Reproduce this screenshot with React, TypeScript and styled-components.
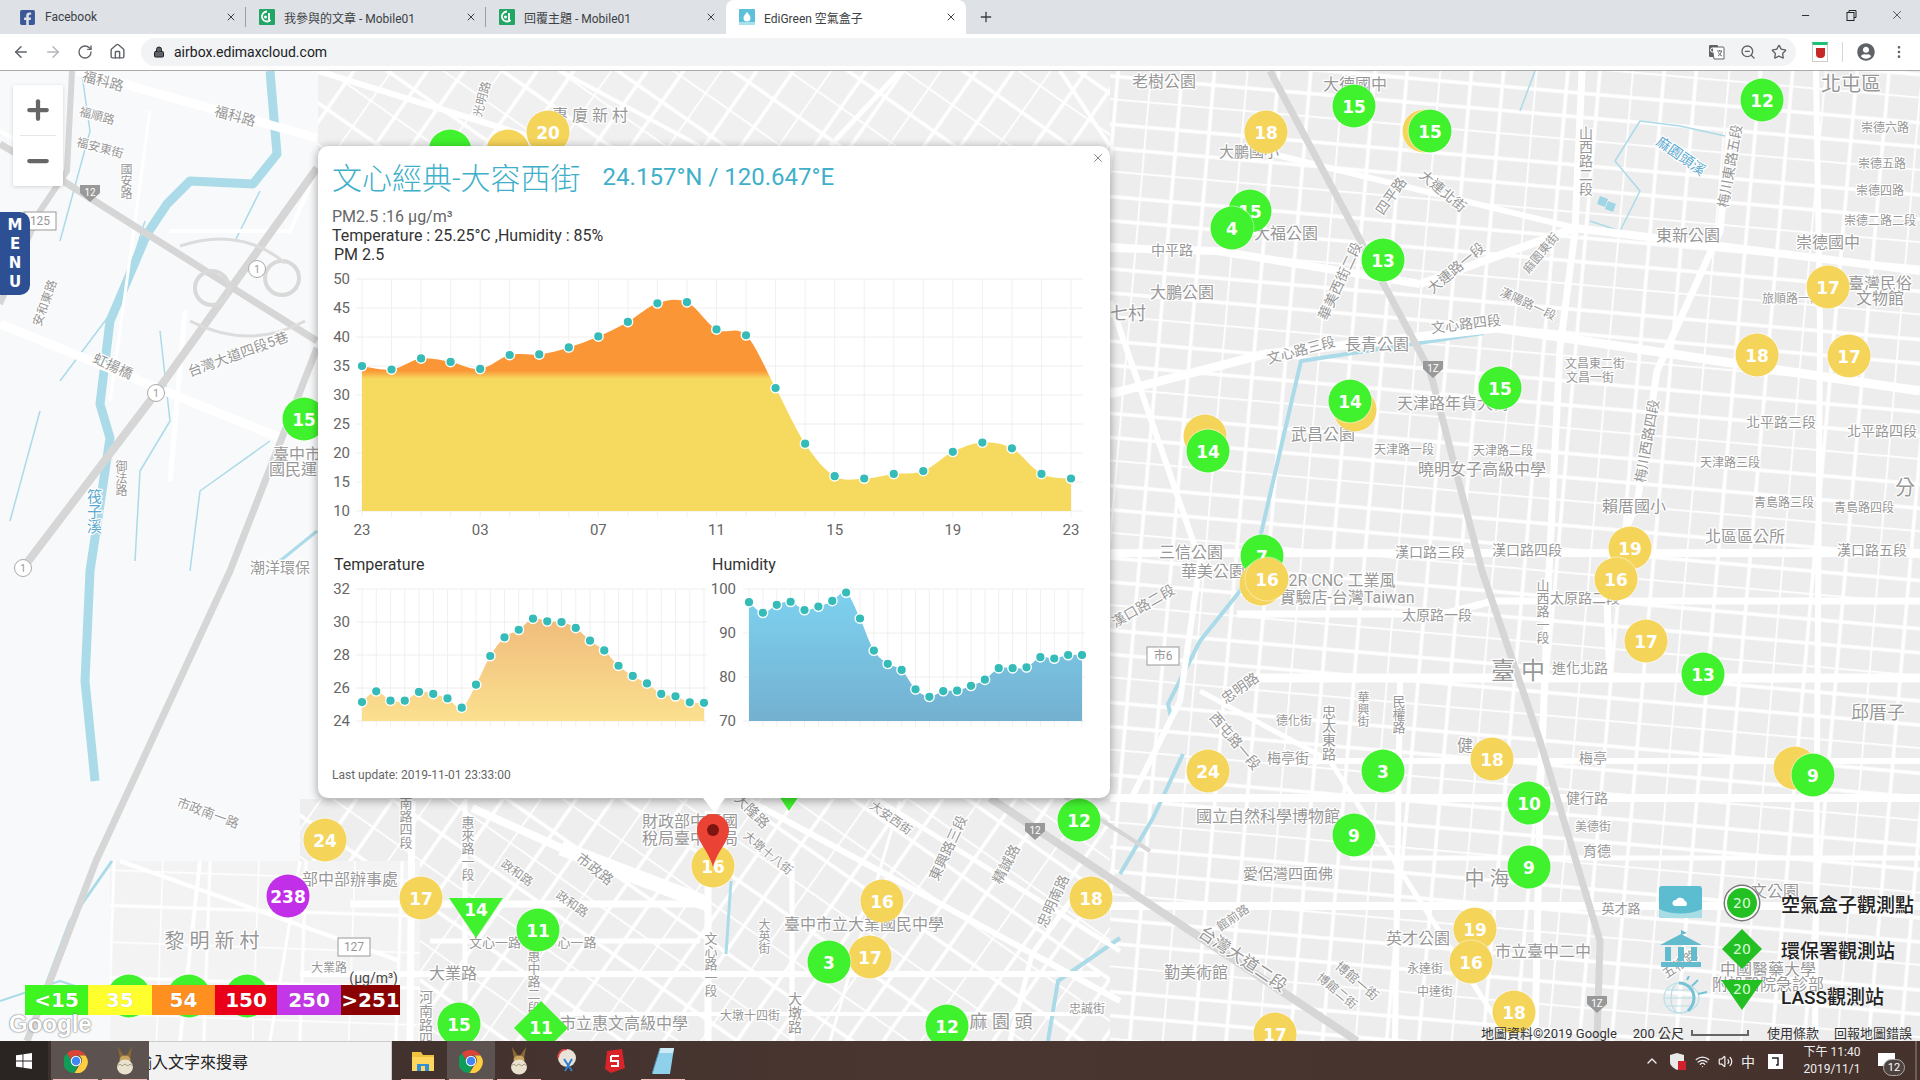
import React, { FC } from 'react';
import styled, { createGlobalStyle, css } from 'styled-components';
import {
	ArrowLeft,
	ArrowRight,
	ChevronUp,
	Home,
	Lock,
	Minus,
	MoreVertical,
	Plus,
	RotateCw,
	Star,
	Volume2,
	Wifi,
	X,
	ZoomOut,
} from 'lucide-react';
import { FaFacebookSquare, FaUserCircle } from 'react-icons/fa';

const GlobalStyle = createGlobalStyle`
	html, body { margin: 0; padding: 0; background: #fff; }
	* { box-sizing: border-box; }
`;

const CJK = `Roboto, "Noto Sans CJK TC", sans-serif`;

const Page = styled.div`
	width: 1920px;
	height: 1080px;
	display: flex;
	flex-direction: column;
	overflow: hidden;
	font-family: ${CJK};
`;

/* ---------- browser chrome ---------- */

const TabStrip = styled.div`
	height: 34px;
	flex: none;
	display: flex;
	align-items: stretch;
	padding-left: 6px;
	background: #dee1e6;
`;

const Tab = styled.div<{ $active?: boolean; $divider?: boolean }>`
	position: relative;
	width: 240px;
	display: flex;
	align-items: center;
	gap: 9px;
	padding: 0 9px 0 13px;
	font-size: 12px;
	color: #3c4043;
	${({ $active }) =>
		$active &&
		css`
			background: #fff;
			border-radius: 8px 8px 0 0;
		`}
	${({ $divider }) =>
		$divider &&
		css`
			&::after {
				content: '';
				position: absolute;
				right: 0;
				top: 7px;
				height: 20px;
				width: 1px;
				background: #9aa0a6;
			}
		`}
`;

const TabTitle = styled.span`
	flex: 1;
	white-space: nowrap;
`;

const NewTab = styled.div`
	width: 40px;
	display: flex;
	align-items: center;
	justify-content: center;
	color: #3c4043;
`;

const WindowButtons = styled.div`
	margin-left: auto;
	display: flex;
	color: #222;
`;

const WindowButton = styled.div`
	width: 46px;
	height: 30px;
	display: flex;
	align-items: center;
	justify-content: center;
`;

const Toolbar = styled.div`
	height: 37px;
	flex: none;
	display: flex;
	align-items: center;
	padding: 0 0 1px 5px;
	background: #fff;
	border-bottom: 1px solid #ababab;
	color: #5f6368;
`;

const NavButton = styled.div<{ $dim?: boolean }>`
	width: 32px;
	display: flex;
	justify-content: center;
	color: ${({ $dim }) => ($dim ? '#b4b7bb' : '#5f6368')};
`;

const Omnibox = styled.div`
	width: 1655px;
	height: 28px;
	margin-left: 8px;
	display: flex;
	align-items: center;
	gap: 9px;
	padding: 0 9px 0 12px;
	border-radius: 14px;
	background: #f1f3f4;
	font-size: 14px;
	color: #202124;
`;

const OmniActions = styled.div`
	margin-left: auto;
	display: flex;
	align-items: center;
	gap: 15px;
	color: #5f6368;
`;

const ExtIcon = styled.div`
	width: 16px;
	height: 20px;
	margin-left: 16px;
	border: 1px solid #ccc;
	border-top: 3px solid #1fbf75;
	display: flex;
	align-items: center;
	justify-content: center;
`;

const ExtBadge = styled.div`
	width: 9px;
	height: 10px;
	background: #c62828;
	border-radius: 0 0 4px 4px;
`;

const ToolSep = styled.div`
	width: 1px;
	height: 20px;
	margin: 0 14px;
	background: #d5d7da;
`;

const MenuDots = styled.div`
	width: 16px;
	margin-left: 16px;
	display: flex;
	justify-content: center;
`;

/* ---------- map ---------- */

const MapArea = styled.div`
	position: relative;
	height: 970px;
	flex: none;
	overflow: hidden;
	background: #f8f9fa;
`;

const MapDrawing = styled.svg`
	display: block;
	width: 1920px;
	height: 970px;
`;

const MapText = styled.text<{ $vertical?: boolean; $water?: boolean }>`
	font-family: Roboto, 'Noto Sans CJK TC', sans-serif;
	text-anchor: middle;
	dominant-baseline: central;
	fill: ${({ $water }) => ($water ? '#5ca9cf' : '#979797')};
	stroke: #fff;
	stroke-width: 2.5px;
	stroke-linejoin: round;
	paint-order: stroke;
	${({ $vertical }) => $vertical && 'writing-mode: vertical-rl;'}
`;

type MarkerKind = 'circle' | 'triangle' | 'diamond';
interface MarkerProps {
	$x: number;
	$y: number;
	$color: string;
	$kind?: MarkerKind;
}

const Marker = styled.div.attrs<MarkerProps>(({ $x, $y }) => ({
	style: { left: $x, top: $y - 70 },
}))<MarkerProps>`
	position: absolute;
	transform: translate(-50%, -50%);
	display: flex;
	align-items: center;
	justify-content: center;
	background: ${({ $color }) => $color};
	color: #fff;
	font-family: 'DejaVu Sans', sans-serif;
	font-weight: 700;
	font-size: 17px;
	${({ $kind = 'circle' }) =>
		$kind === 'circle' &&
		css`
			width: 43px;
			height: 43px;
			border-radius: 50%;
			box-shadow: 0 0 0 1px rgba(255, 255, 255, 0.45);
		`}
	${({ $kind }) =>
		$kind === 'triangle' &&
		css`
			width: 54px;
			height: 40px;
			padding-bottom: 16px;
			clip-path: polygon(0 0, 100% 0, 50% 100%);
		`}
	${({ $kind }) =>
		$kind === 'diamond' &&
		css`
			width: 54px;
			height: 54px;
			clip-path: polygon(50% 0, 100% 50%, 50% 100%, 0 50%);
		`}
`;

const ZoomControl = styled.div`
	position: absolute;
	left: 13px;
	top: 14px;
	width: 50px;
	height: 101px;
	display: flex;
	flex-direction: column;
	align-items: center;
	background: #fff;
	border-radius: 2px;
	box-shadow: 0 1px 4px rgba(0, 0, 0, 0.15);
	color: #666;
`;

const ZoomButton = styled.div`
	flex: 1;
	width: 100%;
	display: flex;
	align-items: center;
	justify-content: center;
`;

const ZoomRule = styled.div`
	width: 36px;
	height: 1px;
	background: #e6e6e6;
`;

const MenuTab = styled.div`
	position: absolute;
	left: 0;
	top: 141px;
	width: 30px;
	height: 83px;
	display: flex;
	flex-direction: column;
	align-items: center;
	justify-content: center;
	border-radius: 0 10px 10px 0;
	background: #2d4f93;
	color: #fff;
	font-family: 'DejaVu Sans', sans-serif;
	font-size: 15px;
	line-height: 19px;
	font-weight: 700;
`;

/* ---------- info window ---------- */

const InfoWindow = styled.div`
	position: absolute;
	left: 318px;
	top: 75px;
	width: 792px;
	height: 652px;
	padding: 10px 16px 14px 14px;
	background: #fff;
	border-radius: 10px;
	box-shadow: 0 2px 8px 1px rgba(0, 0, 0, 0.32);
	&::after {
		content: '';
		position: absolute;
		left: 385px;
		bottom: -14px;
		border-left: 11px solid transparent;
		border-right: 11px solid transparent;
		border-top: 14px solid #fff;
	}
`;

const CloseButton = styled.div`
	position: absolute;
	top: 4px;
	right: 5px;
	width: 14px;
	height: 14px;
	color: #777;
`;

const TitleRow = styled.div`
	height: 40px;
	display: flex;
	align-items: center;
	gap: 22px;
	color: #3fb0c9;
	white-space: nowrap;
`;

const PlaceName = styled.span`
	font-size: 30px;
	font-weight: 300;
`;

const Coordinates = styled.span`
	font-size: 24px;
	padding-top: 1px;
`;

const MetaLine = styled.div<{ $tone: string }>`
	font-size: 16px;
	line-height: 19px;
	color: ${({ $tone }) => $tone};
`;

const ChartCaption = styled.div`
	padding-left: 2px;
	font-size: 16px;
	line-height: 20px;
	color: #333;
`;

const MetaBlock = styled.div`
	margin-top: 11px;
`;

const WideChart = styled.div`
	margin-top: 4px;
`;

const ChartGrid = styled.div`
	margin-top: 9px;
	display: grid;
	grid-template-columns: 378px 380px;
`;

const Footer = styled.div`
	margin-top: 31px;
	font-size: 12px;
	line-height: 18px;
	color: #666;
`;

const ChartSvg = styled.svg`
	display: block;
`;

const AxisText = styled.text`
	font-family: Roboto, sans-serif;
	font-size: 15px;
	fill: #666;
	dominant-baseline: central;
`;

interface ChartProps {
	id: string;
	width: number;
	height: number;
	left: number;
	right: number;
	gridLeft: number;
	gridRight: number;
	top: number;
	bottom: number;
	min: number;
	max: number;
	values: number[];
	yLabels: number[];
	labelRight: number;
	xLabels?: string[];
	stops: [number, string][];
}

const smoothPath = (pts: [number, number][]) => {
	let d = `M${pts[0][0]} ${pts[0][1]}`;
	for (let i = 0; i < pts.length - 1; i++) {
		const p0 = pts[Math.max(i - 1, 0)];
		const p1 = pts[i];
		const p2 = pts[i + 1];
		const p3 = pts[Math.min(i + 2, pts.length - 1)];
		const k = 0.17;
		d += `C${p1[0] + (p2[0] - p0[0]) * k} ${p1[1] + (p2[1] - p0[1]) * k} ${p2[0] - (p3[0] - p1[0]) * k} ${p2[1] - (p3[1] - p1[1]) * k} ${p2[0]} ${p2[1]}`;
	}
	return d;
};

const Chart: FC<ChartProps> = ({
	id,
	width,
	height,
	left,
	right,
	gridLeft,
	gridRight,
	top,
	bottom,
	min,
	max,
	values,
	yLabels,
	labelRight,
	xLabels,
	stops,
}) => {
	const step = (right - left) / (values.length - 1);
	const toY = (v: number) => bottom - ((v - min) / (max - min)) * (bottom - top);
	const pts = values.map((v, i) => [left + i * step, toY(v)] as [number, number]);
	const line = smoothPath(pts);
	const area = `${line}L${right} ${bottom}L${left} ${bottom}Z`;

	return (
		<ChartSvg width={width} height={height} viewBox={`0 0 ${width} ${height}`}>
			<defs>
				<linearGradient id={id} gradientUnits="userSpaceOnUse" x1="0" y1={top} x2="0" y2={bottom}>
					{stops.map(([offset, color]) => (
						<stop key={offset} offset={offset} stopColor={color} />
					))}
				</linearGradient>
			</defs>
			{values.map((_, i) => (
				<line key={i} x1={left + i * step} x2={left + i * step} y1={top} y2={bottom + 6} stroke="#f0f0f0" />
			))}
			{yLabels.map((v) => (
				<g key={v}>
					<line x1={gridLeft} x2={gridRight} y1={toY(v)} y2={toY(v)} stroke="#eeeeee" />
					<AxisText x={labelRight} y={toY(v)} textAnchor="end">
						{v}
					</AxisText>
				</g>
			))}
			<path d={area} fill={`url(#${id})`} />
			{pts.map(([x, y], i) => (
				<circle key={i} cx={x} cy={y} r={4.8} fill="#35bbb8" stroke="#fff" strokeWidth={1.4} />
			))}
			{xLabels &&
				xLabels.map((label, i) => (
					<AxisText key={i} x={left + i * 4 * step} y={bottom + 19} textAnchor="middle">
						{label}
					</AxisText>
				))}
		</ChartSvg>
	);
};

/* ---------- legends over the map ---------- */

const ScaleLegend = styled.div`
	position: absolute;
	left: 25px;
	top: 914px;
	display: grid;
	grid-template-columns: 63px 64px 63px 62px 64px 59px;
`;

const ScaleUnit = styled.div`
	position: absolute;
	right: 2px;
	top: -15px;
	font-family: Roboto, sans-serif;
	font-size: 14px;
	line-height: 16px;
	color: #444;
`;

const ScaleCell = styled.div<{ $color: string }>`
	height: 30px;
	display: flex;
	align-items: center;
	justify-content: center;
	background: ${({ $color }) => $color};
	color: #fff;
	font-family: 'DejaVu Sans', sans-serif;
	font-weight: 700;
	font-size: 20px;
	text-shadow: 0 0 1px rgba(0, 0, 0, 0.25);
`;

const GoogleMark = styled.div`
	position: absolute;
	left: 9px;
	top: 939px;
	font-family: 'Liberation Sans', sans-serif;
	font-weight: 700;
	font-size: 24px;
	color: #fff;
	text-shadow: 0 0 2px #777, 0 0 1px #777;
`;

const Attribution = styled.div`
	position: absolute;
	right: 8px;
	bottom: 1px;
	height: 16px;
	display: flex;
	align-items: center;
	font-size: 13px;
	color: #333;
	white-space: nowrap;
`;

const ScaleBar = styled.div`
	width: 58px;
	height: 6px;
	margin: 2px 18px 0 7px;
	border: 2px solid #666;
	border-top: 0;
`;

const ReportLink = styled.span`
	margin-left: 15px;
`;

const GoogleData = styled.span`
	margin-right: 16px;
`;

const StationLegend = styled.div`
	position: absolute;
	left: 1659px;
	top: 809px;
	display: grid;
	grid-template-columns: 50px 66px auto;
	grid-auto-rows: 46px;
	align-items: center;
`;

const StationLabel = styled.div`
	padding-left: 6px;
	font-size: 19px;
	font-weight: 500;
	color: #222;
	white-space: nowrap;
	text-shadow: 0 0 3px #fff;
`;

const StationBadge = styled.div<{ $kind: MarkerKind }>`
	justify-self: center;
	display: flex;
	align-items: center;
	justify-content: center;
	color: #d8ffd8;
	background: #23c023;
	font-family: 'DejaVu Sans', sans-serif;
	font-size: 14px;
	${({ $kind }) =>
		$kind === 'circle' &&
		css`
			width: 34px;
			height: 34px;
			border-radius: 50%;
			border: 2px solid #fff;
			box-shadow: 0 0 0 1.5px #777;
		`}
	${({ $kind }) =>
		$kind === 'diamond' &&
		css`
			width: 40px;
			height: 40px;
			clip-path: polygon(50% 0, 100% 50%, 50% 100%, 0 50%);
		`}
	${({ $kind }) =>
		$kind === 'triangle' &&
		css`
			width: 42px;
			height: 30px;
			padding-bottom: 12px;
			clip-path: polygon(0 0, 100% 0, 50% 100%);
		`}
`;

/* ---------- taskbar ---------- */

const Taskbar = styled.div`
	height: 40px;
	flex: none;
	display: flex;
	align-items: stretch;
	background: linear-gradient(90deg, #3c2f2c, #4a3631 50%, #46322d);
	color: #eee;
`;

const StartButton = styled.div`
	width: 48px;
	margin-right: 3px;
	display: flex;
	align-items: center;
	justify-content: center;
	background: #2a2422;
`;

const TaskButton = styled.div<{ $active?: boolean; $running?: boolean; $width?: number }>`
	position: relative;
	width: ${({ $width }) => $width || 48}px;
	display: flex;
	align-items: center;
	justify-content: center;
	background: ${({ $active }) => ($active ? '#5c5250' : 'transparent')};
	${({ $running }) =>
		$running &&
		css`
			&::after {
				content: '';
				position: absolute;
				left: 2px;
				right: 2px;
				bottom: 0;
				height: 2px;
				background: #f3bcbc;
			}
		`}
`;

const SearchBox = styled.div`
	width: 243px;
	margin-right: 7px;
	display: flex;
	align-items: center;
	overflow: hidden;
	white-space: nowrap;
	text-indent: -13px;
	background: #f2f2f2;
	border: 1px solid #ccc;
	border-left: 0;
	font-size: 16px;
	color: #222;
`;

const Tray = styled.div`
	margin-left: auto;
	display: flex;
	align-items: center;
`;

const TraySlot = styled.div<{ $width: number }>`
	width: ${({ $width }) => $width}px;
	display: flex;
	align-items: center;
	justify-content: center;
	font-size: 14px;
`;

const Clock = styled.div`
	width: 84px;
	text-align: center;
	font-size: 12px;
	line-height: 17px;
`;

const NoticeIcon = styled.div`
	position: relative;
	width: 43px;
	height: 100%;
	border-right: 2px solid #6e5e5a;
	margin-right: 3px;
`;

const NoticeGlyph = styled.div`
	position: absolute;
	left: 4px;
	top: 12px;
	width: 17px;
	height: 13px;
	background: #fff;
`;

const NoticeCount = styled.div`
	position: absolute;
	left: 9px;
	top: 18px;
	width: 22px;
	height: 17px;
	border-radius: 9px;
	background: #4f4340;
	border: 1px solid #aaa;
	text-align: center;
	font-size: 11px;
	line-height: 15px;
	color: #fff;
`;

/* ---------- little drawings ---------- */

const ChromeLogo: FC<{ size?: number }> = ({ size = 24 }) => (
	<svg width={size} height={size} viewBox="0 0 48 48">
		<path d="M24 2a22 22 0 0 1 19 11H24a11 11 0 0 0-10.5 8L6 9A22 22 0 0 1 24 2z" fill="#db4437" />
		<path d="M6 9l9 15a11 11 0 0 0 12 9l-6 14.800A22 22 0 0 1 6 9z" fill="#0f9d58" />
		<path d="M43 13a22 22 0 0 1-22 34.800L31 32a11 11 0 0 0-1-19z" fill="#ffcd40" />
		<circle cx="24" cy="24" r="10.500" fill="#fff" />
		<circle cx="24" cy="24" r="8.500" fill="#4285f4" />
	</svg>
);

const BirdEgg: FC = () => (
	<svg width="24" height="28" viewBox="0 0 24 28">
		<path d="M5 0l6 9h2l6-9-2 12H7z" fill="#8a6a34" />
		<ellipse cx="12" cy="13" rx="5.500" ry="4.500" fill="#c9a560" />
		<ellipse cx="12" cy="20" rx="8" ry="7.500" fill="#e9e2cf" />
		<path d="M4 19l3-2 2 2 3-2 3 2 2-2 3 2" stroke="#a89b80" fill="none" />
	</svg>
);

const Mobile01Icon: FC = () => (
	<svg width="16" height="16" viewBox="0 0 16 16">
		<rect width="16" height="16" rx="1" fill="#22a565" />
		<path d="M8 2.500a5 5 0 1 0 3.500 8.500" stroke="#fff" strokeWidth="1.800" fill="none" />
		<path d="M10 4v7" stroke="#fff" strokeWidth="1.800" />
		<circle cx="6.500" cy="8" r="1.500" fill="#fff" />
	</svg>
);

const EdiGreenIcon: FC = () => (
	<svg width="16" height="16" viewBox="0 0 16 16">
		<rect width="16" height="16" rx="1" fill="#5cc0da" />
		<path d="M8 3c2 2.500 3.500 4 3.500 6a3.500 3.500 0 0 1-7 0c0-2 1.500-3.500 3.500-6z" fill="#fff" />
		<rect y="13" width="16" height="3" fill="#a9e0ec" />
	</svg>
);

const TranslateIcon: FC = () => (
	<svg width="16" height="16" viewBox="0 0 16 16">
		<rect x="0" y="1" width="9" height="12" rx="1" fill="#5f6368" />
		<path d="M3 3h11a1 1 0 0 1 1 1v11H5z" fill="#fff" stroke="#5f6368" />
		<circle cx="3.500" cy="6" r="2" fill="none" stroke="#fff" />
		<path d="M8 7h5M10.500 6v1M9 12c2-1 3-3 3.500-5M9.500 8.500c.5 1.500 2 3 3.500 3.500" stroke="#5f6368" fill="none" />
	</svg>
);

const WindowsLogo: FC = () => (
	<svg width="16" height="16" viewBox="0 0 16 16" fill="#fff">
		<path d="M0 2.300l6.500-.9v6.200H0zM7.400 1.300L16 0v7.600H7.400zM0 8.400h6.500v6.200L0 13.700zM7.400 8.400H16V16l-8.600-1.300z" />
	</svg>
);

const FolderIcon: FC = () => (
	<svg width="22" height="22" viewBox="0 0 22 22">
		<path d="M0 2h9l2 3h11v4H0z" fill="#f0c040" />
		<rect y="7" width="22" height="14" fill="#ffd75e" />
		<rect x="5" y="14" width="12" height="7" fill="#2f8fd8" />
		<rect x="9" y="16" width="4" height="5" fill="#ffd75e" />
	</svg>
);

const PaintIcon: FC = () => (
	<svg width="24" height="24" viewBox="0 0 24 24">
		<circle cx="12" cy="9" r="9" fill="#e8e2d8" />
		<path d="M3 9a9 9 0 0 1 9-9" stroke="#d44" strokeWidth="2" fill="none" />
		<path d="M9 10l8 12M17 10l-7 12" stroke="#2f7fd0" strokeWidth="2" />
	</svg>
);

const SketchIcon: FC = () => (
	<svg width="20" height="24" viewBox="0 0 20 24">
		<path d="M2 2l15-2 3 19-14 5-6-4z" fill="#d9252a" />
		<path d="M6 7h8M6 7v5h7v5H6" stroke="#fff" strokeWidth="2" fill="none" />
	</svg>
);

const NoteIcon: FC = () => (
	<svg width="22" height="26" viewBox="0 0 22 26">
		<path d="M8 0h14l-4 26H0z" fill="#8fd0ea" />
		<path d="M8 0h14l-1 5H7z" fill="#cdeaf5" />
		<path d="M0 26l8-26" stroke="#4f8fb0" />
	</svg>
);

const ShieldAlert: FC = () => (
	<svg width="17" height="17" viewBox="0 0 17 17">
		<path d="M1 2l7-2 7 2v7c0 4-4 6-7 8-3-2-7-4-7-8z" fill="#e9e9e9" />
		<rect x="9" y="8" width="8" height="9" fill="#d2222d" />
	</svg>
);

const AirboxIcon: FC = () => (
	<svg width="44" height="34" viewBox="0 0 44 34">
		<rect width="43" height="32" rx="3" fill="#5cbcd0" />
		<path d="M0 23c12 6 31 6 43 0v6a3 3 0 0 1-3 3H3a3 3 0 0 1-3-3z" fill="#a9dde6" />
		<path d="M16 20a3 3 0 0 1 1-6 5 5 0 0 1 9 1 3 3 0 0 1 1 5z" fill="#fff" />
	</svg>
);

const BankIcon: FC = () => (
	<svg width="44" height="38" viewBox="0 0 44 38" fill="#63bccd">
		<path d="M22 4l21 11H1z" />
		<path d="M22 0v5l6-2z" />
		<rect x="6" y="17" width="6" height="14" />
		<rect x="19" y="17" width="6" height="14" />
		<rect x="32" y="17" width="6" height="14" />
		<rect x="2" y="32" width="40" height="5" />
	</svg>
);

const GlobeIcon: FC = () => (
	<svg width="50" height="38" viewBox="0 0 50 38" fill="none" stroke="#75c3d4" strokeWidth="1.200">
		<circle cx="20" cy="22" r="15" stroke="#b8dfe8" />
		<path d="M20 7a20 15 0 0 1 0 30M5 22h30M8 14h24M8 30h24M20 7a8 15 0 0 0 0 30" stroke="#b8dfe8" />
		<path d="M20 7a15 15 0 0 1 15 15c0 6-3 10-6 13" strokeWidth="3" />
		<path d="M33 10l6-6M39 18l9-2M28 4l2-4" strokeWidth="2" />
	</svg>
);

const RedPin: FC = () => (
	<svg width="32" height="53" viewBox="0 0 32 53">
		<path d="M16 0C7 0 0 7 0 16c0 12 12 21 16 37 4-16 16-25 16-37C32 7 25 0 16 0z" fill="#ea4335" />
		<circle cx="16" cy="16" r="6" fill="#7e1510" />
	</svg>
);

const PinHolder = styled.div`
	position: absolute;
	left: 697px;
	top: 743px;
	line-height: 0;
`;

/* ---------- map data ---------- */

type Pt = [number, number];
const pathOf = (pts: Pt[]) => pts.map(([x, y], i) => `${i ? 'L' : 'M'}${x} ${y}`).join('');

const water: { pts: Pt[]; w: number }[] = [
	{ pts: [[270, 70], [277, 153], [253, 183], [190, 180], [167, 203], [147, 233], [110, 320], [100, 403], [110, 437], [90, 570], [85, 680], [95, 780]], w: 9 },
	{ pts: [[1484, 332], [1301, 360], [1291, 403], [1260, 537], [1240, 590], [1200, 640], [1168, 703], [1172, 720]], w: 4 },
	{ pts: [[1183, 753], [1153, 817], [1120, 873]], w: 4 },
	{ pts: [[731, 880], [726, 953]], w: 3 },
	{ pts: [[1120, 937], [1058, 980], [1048, 1040]], w: 4 },
	{ pts: [[112, 860], [70, 920], [40, 1000]], w: 3 },
	{ pts: [[0, 1000], [60, 980], [120, 1000]], w: 2 },
	{ pts: [[1590, 220], [1620, 230], [1640, 190], [1615, 160], [1640, 120], [1680, 125], [1725, 135]], w: 1.5 },
	{ pts: [[1535, 70], [1520, 110]], w: 1.5 },
	{ pts: [[80, 60], [90, 130], [60, 240]], w: 1.5 },
	{ pts: [[145, 220], [120, 300], [60, 380]], w: 1.5 },
	{ pts: [[260, 190], [235, 240]], w: 1.5 },
	{ pts: [[160, 330], [170, 420], [140, 470], [135, 560]], w: 1.5 },
	{ pts: [[270, 440], [200, 490], [190, 570]], w: 1.5 },
	{ pts: [[40, 410], [10, 520]], w: 1.5 },
	{ pts: [[280, 560], [317, 530]], w: 3 },
];

const greyRoads: { pts: Pt[]; w: number }[] = [
	{ pts: [[23, 567], [150, 400], [317, 167]], w: 8 },
	{ pts: [[317, 347], [230, 570], [96, 860], [27, 1040]], w: 7 },
	{ pts: [[0, 143], [63, 180], [317, 340]], w: 7 },
	{ pts: [[72, 70], [67, 170], [40, 210], [0, 303]], w: 6 },
	{ pts: [[1270, 70], [1430, 370], [1482, 570], [1540, 740], [1600, 940], [1597, 1040]], w: 7 },
	{ pts: [[990, 797], [1110, 877], [1357, 1040]], w: 8 },
	{ pts: [[1150, 850], [1040, 780]], w: 4 },
];

const whiteRoads: { pts: Pt[]; w: number }[] = [
	{ pts: [[77, 70], [317, 137]], w: 9 },
	{ pts: [[0, 323], [280, 437]], w: 9 },
	{ pts: [[0, 130], [60, 165]], w: 4 },
	{ pts: [[150, 110], [120, 330], [110, 400]], w: 3 },
	{ pts: [[185, 310], [170, 480]], w: 5 },
	{ pts: [[170, 230], [290, 230], [317, 170]], w: 4 },
	{ pts: [[1110, 393], [1265, 353], [1497, 327], [1920, 390]], w: 9 },
	{ pts: [[1110, 247], [1218, 250], [1420, 283]], w: 8 },
	{ pts: [[1420, 283], [1575, 227], [1920, 270]], w: 8 },
	{ pts: [[1260, 150], [1575, 227]], w: 6 },
	{ pts: [[1582, 70], [1575, 230], [1560, 347], [1549, 570], [1540, 800], [1535, 1040]], w: 7 },
	{ pts: [[1730, 127], [1720, 230], [1657, 370], [1637, 503], [1606, 570], [1610, 680]], w: 7 },
	{ pts: [[1110, 552], [1920, 552]], w: 8 },
	{ pts: [[1237, 613], [1443, 613], [1493, 600], [1920, 600]], w: 7 },
	{ pts: [[1253, 677], [1610, 677], [1920, 677]], w: 9 },
	{ pts: [[1270, 760], [1920, 760]], w: 6 },
	{ pts: [[1110, 797], [1920, 797]], w: 8 },
	{ pts: [[1350, 857], [1920, 857]], w: 5 },
	{ pts: [[1110, 905], [1920, 905]], w: 8 },
	{ pts: [[1110, 300], [1200, 560], [1180, 700], [1130, 800]], w: 6 },
	{ pts: [[1400, 680], [1395, 1040]], w: 6 },
	{ pts: [[1200, 690], [1330, 760], [1420, 900], [1510, 1040]], w: 5 },
	{ pts: [[1816, 70], [1820, 330], [1815, 1040]], w: 6 },
	{ pts: [[561, 847], [708, 903]], w: 15 },
	{ pts: [[472, 807], [561, 847]], w: 8 },
	{ pts: [[708, 810], [708, 1040]], w: 7 },
	{ pts: [[300, 973], [1100, 973]], w: 6 },
	{ pts: [[412, 800], [410, 1040]], w: 7 },
	{ pts: [[465, 800], [465, 1000]], w: 5 },
	{ pts: [[350, 903], [700, 903]], w: 7 },
	{ pts: [[430, 940], [700, 940]], w: 5 },
	{ pts: [[792, 860], [792, 1040]], w: 5 },
	{ pts: [[750, 800], [1120, 1000]], w: 6 },
	{ pts: [[875, 797], [1120, 950]], w: 5 },
	{ pts: [[1085, 880], [1032, 953], [1010, 1040]], w: 5 },
	{ pts: [[560, 1013], [1100, 1013]], w: 4 },
	{ pts: [[900, 800], [830, 1040]], w: 3 },
	{ pts: [[318, 70], [560, 145]], w: 6 },
	{ pts: [[560, 70], [700, 145]], w: 4 },
	{ pts: [[900, 70], [830, 145]], w: 5 },
	{ pts: [[1060, 70], [1110, 145]], w: 4 },
	{ pts: [[120, 860], [400, 960]], w: 4 },
	{ pts: [[200, 860], [180, 1040]], w: 4 },
	{ pts: [[300, 860], [270, 1040]], w: 3 },
];

// text, x, y, size, rotation ('v' for a vertical label)
type Label = [string, number, number, number, (number | 'v')?];
const labels: Label[] = [
	['三信公園', 1191, 551, 16],
	['華美公園', 1213, 570, 16],
	['漢口路三段', 1430, 551, 14],
	['漢口路四段', 1527, 549, 14],
	['2R CNC 工業風', 1342, 579, 16],
	['實驗店-台灣Taiwan', 1347, 596, 16],
	['太原路一段', 1437, 614, 14],
	['太原路二段', 1585, 597, 14],
	['漢口路二段', 1143, 605, 14, -30],
	['山西路一段', 1542, 610, 13, 'v'],
	['臺 中', 1518, 670, 24],
	['進化北路', 1580, 667, 14],
	['忠明路', 1240, 687, 14, -35],
	['西屯路一段', 1235, 740, 14, 50],
	['德化街', 1294, 720, 12],
	['梅亭街', 1288, 757, 14],
	['忠太東路', 1328, 732, 14, 'v'],
	['華興街', 1362, 708, 12, 'v'],
	['民權路', 1398, 713, 13, 'v'],
	['健行路', 1587, 797, 14],
	['健', 1465, 744, 16],
	['國立自然科學博物館', 1268, 815, 16],
	['愛侶灣四面佛', 1288, 873, 15],
	['勤美術館', 1196, 971, 16],
	['台灣大道二段', 1243, 958, 17, 34],
	['館前路', 1233, 917, 12, -35],
	['博館一街', 1357, 980, 13, 40],
	['博館二街', 1337, 990, 12, 40],
	['英才公園', 1418, 937, 16],
	['永達街', 1425, 968, 12],
	['中達街', 1435, 991, 12],
	['市立臺中二中', 1543, 950, 16],
	['中 海', 1487, 878, 20],
	['英才路', 1621, 907, 13],
	['梅亭', 1593, 757, 14],
	['育德', 1597, 850, 14],
	['老樹公園', 1164, 80, 16],
	['大德國中', 1355, 83, 16],
	['北屯區', 1851, 83, 20],
	['大鵬國小', 1249, 151, 15],
	['大連北街', 1443, 190, 14, 40],
	['四平路', 1391, 195, 14, -55],
	['山西路二段', 1585, 160, 14, 'v'],
	['梅川東路五段', 1730, 165, 14, -80],
	['中平路', 1172, 249, 14],
	['大福公園', 1286, 232, 16],
	['東新公園', 1688, 234, 16],
	['崇德國中', 1828, 241, 16],
	['大連路一段', 1456, 267, 14, -40],
	['華美西街二段', 1340, 280, 14, -65],
	['大鵬公園', 1182, 291, 16],
	['七村', 1128, 312, 18],
	['麻園東街', 1541, 252, 12, -50],
	['臺灣民俗', 1880, 282, 16],
	['文物館', 1880, 297, 16],
	['文心路四段', 1466, 323, 14, -7],
	['文心路三段', 1301, 349, 14, -15],
	['長青公園', 1377, 343, 16],
	['漢陽路一段', 1528, 303, 12, 25],
	['文昌東二街', 1595, 363, 12],
	['文昌一街', 1590, 377, 12],
	['天津路年貨大街', 1453, 402, 16],
	['武昌公園', 1323, 433, 16],
	['北平路三段', 1781, 421, 14],
	['北平路四段', 1882, 430, 14],
	['天津路一段', 1404, 449, 12],
	['天津路二段', 1503, 450, 12],
	['曉明女子高級中學', 1482, 468, 16],
	['賴厝國小', 1634, 505, 16],
	['北區區公所', 1745, 535, 16],
	['漢口路五段', 1872, 549, 14],
	['梅川西路四段', 1647, 440, 14, -80],
	['天津路三段', 1730, 462, 12],
	['青島路三段', 1784, 502, 12],
	['青島路四段', 1864, 507, 12],
	['崇德六路', 1885, 127, 12],
	['崇德五路', 1882, 163, 12],
	['崇德四路', 1880, 190, 12],
	['崇德二路二段', 1880, 220, 12],
	['分', 1905, 487, 20],
	['邱厝子', 1878, 711, 18],
	['旅順路一段', 1792, 298, 12],
	['財政部中區國', 690, 820, 16],
	['稅局臺中分局', 690, 837, 16],
	['大隆路', 752, 810, 14, 45],
	['大安西街', 891, 817, 12, 35],
	['市政路', 595, 868, 14, 38],
	['政和路', 517, 872, 12, 35],
	['政和路', 572, 903, 12, 35],
	['文心路一段', 710, 963, 13, 'v'],
	['臺中市立大業國民中學', 864, 923, 16],
	['大墩十八街', 768, 852, 12, 40],
	['大墩路', 794, 1012, 14, 'v'],
	['大墩十四街', 750, 1015, 12],
	['大英街', 763, 935, 12, 'v'],
	['麻 園 頭', 1001, 1020, 18],
	['黎 明 新 村', 212, 940, 20],
	['大業路', 453, 972, 16],
	['大業路', 329, 967, 12],
	['惠來路一段', 467, 847, 13, 'v'],
	['河南路四段', 405, 815, 13, 'v'],
	['文心一路', 495, 941, 13],
	['心一路', 577, 941, 13],
	['惠中路二段', 533, 980, 13, 'v'],
	['市立惠文高級中學', 624, 1022, 16],
	['河南路四', 425, 1017, 14, 'v'],
	['部中部辦事處', 350, 878, 16],
	['精誠路', 1006, 863, 14, -62],
	['東興路三段', 948, 847, 14, -65],
	['忠明南路', 1053, 900, 14, -65],
	['忠誠街', 1087, 1008, 12],
	['福科路', 235, 115, 14, 15],
	['福科路', 103, 80, 14, 15],
	['福順路', 97, 115, 12, 15],
	['福安東街', 100, 147, 12, 15],
	['國安路', 125, 180, 12, 'v'],
	['虹揚橋', 113, 365, 14, 25],
	['台灣大道四段5巷', 238, 353, 14, -20],
	['安和東路', 45, 302, 12, -70],
	['臺中市', 297, 453, 16],
	['國民運', 293, 468, 16],
	['潮洋環保', 280, 567, 15],
	['御法路', 120, 477, 12, 'v'],
	['惠 廈 新 村', 590, 114, 16],
	['光明路', 482, 98, 12, -75],
	['市政南一路', 208, 812, 13, 20],
	['中國醫藥大學', 1768, 968, 16],
	['附設醫院急診部', 1768, 983, 16],
	['五權路', 1680, 963, 13, -35],
	['美德街', 1593, 826, 12],
	['文公園', 1775, 890, 16],
];

const shields: { x: number; y: number; text: string; plum?: boolean }[] = [
	{ x: 257, y: 268, text: '1', plum: true },
	{ x: 156, y: 392, text: '1', plum: true },
	{ x: 23, y: 567, text: '1', plum: true },
	{ x: 90, y: 192, text: '12' },
	{ x: 1035, y: 830, text: '12' },
	{ x: 1433, y: 368, text: '1Z' },
	{ x: 1597, y: 1003, text: '1Z' },
];

const boxes: { x: number; y: number; text: string }[] = [
	{ x: 40, y: 220, text: '125' },
	{ x: 1163, y: 655, text: '市6' },
	{ x: 354, y: 946, text: '127' },
];

const GREEN = '#40f22d';
const YELLOW = '#f5d45a';
const PURPLE = '#c22fe8';

const markers: { x: number; y: number; n?: number; color: string; kind?: MarkerKind }[] = [
	{ x: 129, y: 995, color: GREEN },
	{ x: 189, y: 995, color: GREEN },
	{ x: 247, y: 995, color: GREEN },
	{ x: 450, y: 150, color: GREEN },
	{ x: 508, y: 150, color: YELLOW },
	{ x: 548, y: 131, n: 20, color: YELLOW },
	{ x: 304, y: 418, n: 15, color: GREEN },
	{ x: 789, y: 790, color: GREEN, kind: 'triangle' },
	{ x: 1354, y: 105, n: 15, color: GREEN },
	{ x: 1266, y: 131, n: 18, color: YELLOW },
	{ x: 1424, y: 130, color: YELLOW },
	{ x: 1430, y: 130, n: 15, color: GREEN },
	{ x: 1762, y: 99, n: 12, color: GREEN },
	{ x: 1250, y: 210, n: 15, color: GREEN },
	{ x: 1232, y: 227, n: 4, color: GREEN },
	{ x: 1383, y: 259, n: 13, color: GREEN },
	{ x: 1828, y: 286, n: 17, color: YELLOW },
	{ x: 1757, y: 354, n: 18, color: YELLOW },
	{ x: 1849, y: 355, n: 17, color: YELLOW },
	{ x: 1500, y: 387, n: 15, color: GREEN },
	{ x: 1355, y: 409, color: YELLOW },
	{ x: 1350, y: 400, n: 14, color: GREEN },
	{ x: 1205, y: 435, color: YELLOW },
	{ x: 1208, y: 450, n: 14, color: GREEN },
	{ x: 1262, y: 555, n: 7, color: GREEN },
	{ x: 1261, y: 583, color: YELLOW },
	{ x: 1267, y: 578, n: 16, color: YELLOW },
	{ x: 1630, y: 547, n: 19, color: YELLOW },
	{ x: 1616, y: 578, n: 16, color: YELLOW },
	{ x: 1646, y: 640, n: 17, color: YELLOW },
	{ x: 1703, y: 673, n: 13, color: GREEN },
	{ x: 1795, y: 767, color: YELLOW },
	{ x: 1813, y: 774, n: 9, color: GREEN },
	{ x: 1208, y: 770, n: 24, color: YELLOW },
	{ x: 1383, y: 770, n: 3, color: GREEN },
	{ x: 1492, y: 758, n: 18, color: YELLOW },
	{ x: 1529, y: 802, n: 10, color: GREEN },
	{ x: 1354, y: 834, n: 9, color: GREEN },
	{ x: 1529, y: 866, n: 9, color: GREEN },
	{ x: 1475, y: 928, n: 19, color: YELLOW },
	{ x: 1471, y: 961, n: 16, color: YELLOW },
	{ x: 1514, y: 1011, n: 18, color: YELLOW },
	{ x: 1275, y: 1033, n: 17, color: YELLOW },
	{ x: 1079, y: 819, n: 12, color: GREEN },
	{ x: 325, y: 839, n: 24, color: YELLOW },
	{ x: 288, y: 895, n: 238, color: PURPLE },
	{ x: 421, y: 897, n: 17, color: YELLOW },
	{ x: 476, y: 917, n: 14, color: GREEN, kind: 'triangle' },
	{ x: 538, y: 929, n: 11, color: GREEN },
	{ x: 713, y: 865, n: 16, color: YELLOW },
	{ x: 882, y: 900, n: 16, color: YELLOW },
	{ x: 870, y: 956, n: 17, color: YELLOW },
	{ x: 829, y: 961, n: 3, color: GREEN },
	{ x: 1091, y: 897, n: 18, color: YELLOW },
	{ x: 947, y: 1025, n: 12, color: GREEN },
	{ x: 459, y: 1023, n: 15, color: GREEN },
	{ x: 541, y: 1027, n: 11, color: GREEN, kind: 'diamond' },
];

const scale = [
	{ text: '<15', color: '#3ef51f' },
	{ text: '35', color: '#ffff2e' },
	{ text: '54', color: '#ff8f1f' },
	{ text: '150', color: '#ea0018' },
	{ text: '250', color: '#c238e8' },
	{ text: '>251', color: '#8b0000' },
];

const pmValues = [35, 34.4, 36.3, 35.7, 34.5, 36.9, 37, 38.2, 40.1, 42.6, 45.8, 46, 41.3, 40.3, 31.2, 21.6, 16, 15.6, 16.4, 16.9, 20.2, 21.8, 20.8, 16.4, 15.6];
const tempValues = [25.15, 25.8, 25.23, 25.23, 25.76, 25.64, 25.37, 24.81, 26.2, 27.94, 29.07, 29.53, 30.2, 30.04, 30, 29.64, 28.87, 28.28, 27.35, 26.73, 26.28, 25.64, 25.5, 25.13, 25.1];
const humidityValues = [97, 94.6, 96.4, 97.1, 95.2, 96, 97.3, 99.2, 93.3, 86, 83, 81.6, 77.2, 75.5, 76.8, 76.9, 78, 79.4, 82, 82, 82.2, 84.5, 84.2, 85, 85];

const CityMap: FC = () => (
	<MapDrawing viewBox="0 70 1920 970">
		<defs>
			<pattern id="blocksRight" width="96" height="72" patternUnits="userSpaceOnUse" patternTransform="rotate(5)">
				<path d="M0 0H96M0 26H96M0 50H96M0 0V72M32 0V72M64 0V72" stroke="#fff" strokeWidth="3.500" />
			</pattern>
			<pattern id="blocksDiag" width="90" height="66" patternUnits="userSpaceOnUse" patternTransform="rotate(35)">
				<path d="M0 0H90M0 33H90M0 0V66M30 0V66M60 0V66" stroke="#fff" strokeWidth="3.500" />
			</pattern>
			<pattern id="blocksLeft" width="96" height="72" patternUnits="userSpaceOnUse" patternTransform="rotate(2)">
				<path d="M0 0H96M0 36H96M0 0V72M48 0V72" stroke="#fff" strokeWidth="3" />
			</pattern>
		</defs>
		<rect x="1110" y="70" width="810" height="970" fill="#ededed" />
		<rect x="1110" y="70" width="810" height="970" fill="url(#blocksRight)" />
		<rect x="300" y="798" width="810" height="242" fill="#eeeeee" />
		<rect x="300" y="798" width="810" height="242" fill="url(#blocksDiag)" />
		<rect x="110" y="860" width="310" height="180" fill="#f3f3f3" />
		<rect x="110" y="860" width="310" height="180" fill="url(#blocksLeft)" />
		<rect x="318" y="70" width="792" height="80" fill="#f0f0f0" />
		<rect x="318" y="70" width="792" height="80" fill="url(#blocksDiag)" />

		{water.map(({ pts, w }, i) => (
			<path key={i} d={pathOf(pts)} fill="none" stroke="#abdbe8" strokeWidth={w} strokeLinejoin="round" />
		))}
		{whiteRoads.map(({ pts, w }, i) => (
			<path key={i} d={pathOf(pts)} fill="none" stroke="#fff" strokeWidth={w} strokeLinejoin="round" />
		))}
		{greyRoads.map(({ pts, w }, i) => (
			<path key={i} d={pathOf(pts)} fill="none" stroke="#d6d6d6" strokeWidth={w} strokeLinejoin="round" />
		))}
		<circle cx="212" cy="287" r="17" fill="none" stroke="#d9d9d9" strokeWidth="4" />
		<circle cx="282" cy="277" r="17" fill="none" stroke="#d9d9d9" strokeWidth="4" />
		<path d="M180 245Q240 225 285 262M190 320Q250 350 305 320" fill="none" stroke="#dcdcdc" strokeWidth="3" />
		<path d="M1600 195l8 3-3 8-8-3zM1608 200l8 3-3 8-8-3z" fill="#9fd6e6" />

		{boxes.map(({ x, y, text }) => (
			<g key={text}>
				<rect x={x - 16} y={y - 9} width="32" height="18" fill="#fff" stroke="#999" />
				<MapText x={x} y={y} fontSize="12">
					{text}
				</MapText>
			</g>
		))}
		{labels.map(([text, x, y, size, turn], i) => (
			<MapText
				key={i}
				x={x}
				y={y}
				fontSize={size}
				$vertical={turn === 'v'}
				transform={typeof turn === 'number' ? `rotate(${turn} ${x} ${y})` : undefined}
			>
				{text}
			</MapText>
		))}
		<MapText x={93} y={510} fontSize="15" $vertical $water>
			筏子溪
		</MapText>
		<MapText x={1681} y={155} fontSize="14" $water transform="rotate(35 1681 155)">
			麻園頭溪
		</MapText>
		{shields.map(({ x, y, text, plum }, i) =>
			plum ? (
				<g key={i}>
					<circle cx={x} cy={y} r="8.500" fill="#fff" stroke="#aaa" />
					<MapText x={x} y={y} fontSize="10">
						{text}
					</MapText>
				</g>
			) : (
				<g key={i}>
					<path d={`M${x - 10} ${y - 8}h20v8l-10 9-10-9z`} fill="#999" />
					<text x={x} y={y + 3} fontSize="10" fontFamily="Roboto, sans-serif" fill="#fff" textAnchor="middle">
						{text}
					</text>
				</g>
			),
		)}
	</MapDrawing>
);

const App: FC = () => (
	<Page>
		<GlobalStyle />
		<TabStrip>
			<Tab $divider>
				<FaFacebookSquare size={17} color="#3b5998" />
				<TabTitle>Facebook</TabTitle>
				<X size={12} />
			</Tab>
			<Tab $divider>
				<Mobile01Icon />
				<TabTitle>我參與的文章 - Mobile01</TabTitle>
				<X size={12} />
			</Tab>
			<Tab>
				<Mobile01Icon />
				<TabTitle>回覆主題 - Mobile01</TabTitle>
				<X size={12} />
			</Tab>
			<Tab $active>
				<EdiGreenIcon />
				<TabTitle>EdiGreen 空氣盒子</TabTitle>
				<X size={12} />
			</Tab>
			<NewTab>
				<Plus size={16} />
			</NewTab>
			<WindowButtons>
				<WindowButton>
					<Minus size={11} />
				</WindowButton>
				<WindowButton>
					<svg width="11" height="11" viewBox="0 0 11 11" fill="none" stroke="#222">
						<path d="M3 2.500V.5h7v7H8" />
						<rect x="1" y="2.500" width="7" height="8" />
					</svg>
				</WindowButton>
				<WindowButton>
					<X size={14} strokeWidth={1.2} />
				</WindowButton>
			</WindowButtons>
		</TabStrip>

		<Toolbar>
			<NavButton>
				<ArrowLeft size={18} />
			</NavButton>
			<NavButton $dim>
				<ArrowRight size={18} />
			</NavButton>
			<NavButton>
				<RotateCw size={16} />
			</NavButton>
			<NavButton>
				<Home size={17} />
			</NavButton>
			<Omnibox>
				<Lock size={12} fill="#5f6368" />
				airbox.edimaxcloud.com
				<OmniActions>
					<TranslateIcon />
					<ZoomOut size={16} />
					<Star size={16} />
				</OmniActions>
			</Omnibox>
			<ExtIcon>
				<ExtBadge />
			</ExtIcon>
			<ToolSep />
			<FaUserCircle size={18} />
			<MenuDots>
				<MoreVertical size={16} />
			</MenuDots>
		</Toolbar>

		<MapArea>
			<CityMap />
			{markers.map(({ x, y, n, color, kind }, i) => (
				<Marker key={i} $x={x} $y={y} $color={color} $kind={kind}>
					{n}
				</Marker>
			))}
			<PinHolder>
				<RedPin />
			</PinHolder>

			<ZoomControl>
				<ZoomButton>
					<Plus size={30} strokeWidth={3.4} />
				</ZoomButton>
				<ZoomRule />
				<ZoomButton>
					<Minus size={30} strokeWidth={3.4} />
				</ZoomButton>
			</ZoomControl>
			<MenuTab>
				<span>M</span>
				<span>E</span>
				<span>N</span>
				<span>U</span>
			</MenuTab>

			<InfoWindow>
				<CloseButton>
					<X size={14} strokeWidth={1.5} />
				</CloseButton>
				<TitleRow>
					<PlaceName>文心經典-大容西街</PlaceName>
					<Coordinates>24.157°N / 120.647°E</Coordinates>
				</TitleRow>
				<MetaBlock>
					<MetaLine $tone="#666">PM2.5 :16 μg/m³</MetaLine>
					<MetaLine $tone="#333">Temperature : 25.25°C ,Humidity : 85%</MetaLine>
				</MetaBlock>
				<ChartCaption>PM 2.5</ChartCaption>
				<WideChart>
					<Chart
						id="pmFill"
						width={760}
						height={277}
						left={30}
						right={739}
						gridLeft={24}
						gridRight={751}
						top={10}
						bottom={242}
						min={10}
						max={50}
						values={pmValues}
						yLabels={[50, 45, 40, 35, 30, 25, 20, 15, 10]}
						labelRight={18}
						xLabels={['23', '03', '07', '11', '15', '19', '23']}
						stops={[
							[0, '#fb9636'],
							[0.395, '#fb9636'],
							[0.43, '#f6d95f'],
							[1, '#f6d95f'],
						]}
					/>
				</WideChart>
				<ChartGrid>
					<div>
						<ChartCaption>Temperature</ChartCaption>
						<Chart
							id="tempFill"
							width={378}
							height={160}
							left={30}
							right={372}
							gridLeft={24}
							gridRight={375}
							top={14}
							bottom={146}
							min={24}
							max={32}
							values={tempValues}
							yLabels={[32, 30, 28, 26, 24]}
							labelRight={18}
							stops={[
								[0, '#efb878'],
								[0.25, '#f0bd7c'],
								[1, '#fbe08f'],
							]}
						/>
					</div>
					<div>
						<ChartCaption>Humidity</ChartCaption>
						<Chart
							id="humidityFill"
							width={380}
							height={160}
							left={39}
							right={372}
							gridLeft={33}
							gridRight={375}
							top={14}
							bottom={146}
							min={70}
							max={100}
							values={humidityValues}
							yLabels={[100, 90, 80, 70]}
							labelRight={26}
							stops={[
								[0, '#7dd2f0'],
								[1, '#74b0d0'],
							]}
						/>
					</div>
				</ChartGrid>
				<Footer>Last update: 2019-11-01 23:33:00</Footer>
			</InfoWindow>

			<ScaleLegend>
				<ScaleUnit>(μg/m³)</ScaleUnit>
				{scale.map(({ text, color }) => (
					<ScaleCell key={text} $color={color}>
						{text}
					</ScaleCell>
				))}
			</ScaleLegend>
			<GoogleMark>Google</GoogleMark>

			<StationLegend>
				<AirboxIcon />
				<StationBadge $kind="circle">20</StationBadge>
				<StationLabel>空氣盒子觀測點</StationLabel>
				<BankIcon />
				<StationBadge $kind="diamond">20</StationBadge>
				<StationLabel>環保署觀測站</StationLabel>
				<GlobeIcon />
				<StationBadge $kind="triangle">20</StationBadge>
				<StationLabel>LASS觀測站</StationLabel>
			</StationLegend>

			<Attribution>
				<GoogleData>地圖資料©2019 Google</GoogleData>
				200 公尺
				<ScaleBar />
				使用條款
				<ReportLink>回報地圖錯誤</ReportLink>
			</Attribution>
		</MapArea>

		<Taskbar>
			<StartButton>
				<WindowsLogo />
			</StartButton>
			<TaskButton $active $running $width={49}>
				<ChromeLogo />
			</TaskButton>
			<TaskButton $active $running $width={49}>
				<BirdEgg />
			</TaskButton>
			<SearchBox>輸入文字來搜尋</SearchBox>
			<TaskButton $running>
				<FolderIcon />
			</TaskButton>
			<TaskButton $active $running>
				<ChromeLogo />
			</TaskButton>
			<TaskButton $running>
				<BirdEgg />
			</TaskButton>
			<TaskButton>
				<PaintIcon />
			</TaskButton>
			<TaskButton>
				<SketchIcon />
			</TaskButton>
			<TaskButton $running>
				<NoteIcon />
			</TaskButton>
			<Tray>
				<TraySlot $width={24}>
					<ChevronUp size={16} />
				</TraySlot>
				<TraySlot $width={26}>
					<ShieldAlert />
				</TraySlot>
				<TraySlot $width={24}>
					<Wifi size={15} />
				</TraySlot>
				<TraySlot $width={22}>
					<Volume2 size={15} />
				</TraySlot>
				<TraySlot $width={24}>中</TraySlot>
				<TraySlot $width={30}>
					<svg width="15" height="15" viewBox="0 0 15 15">
						<rect width="15" height="15" fill="#fff" />
						<path d="M4 4h6v7H8" stroke="#222" strokeWidth="1.500" fill="none" />
					</svg>
				</TraySlot>
				<Clock>
					下午 11:40
					<br />
					2019/11/1
				</Clock>
				<NoticeIcon>
					<NoticeGlyph />
					<NoticeCount>12</NoticeCount>
				</NoticeIcon>
			</Tray>
		</Taskbar>
	</Page>
);

export default App;
